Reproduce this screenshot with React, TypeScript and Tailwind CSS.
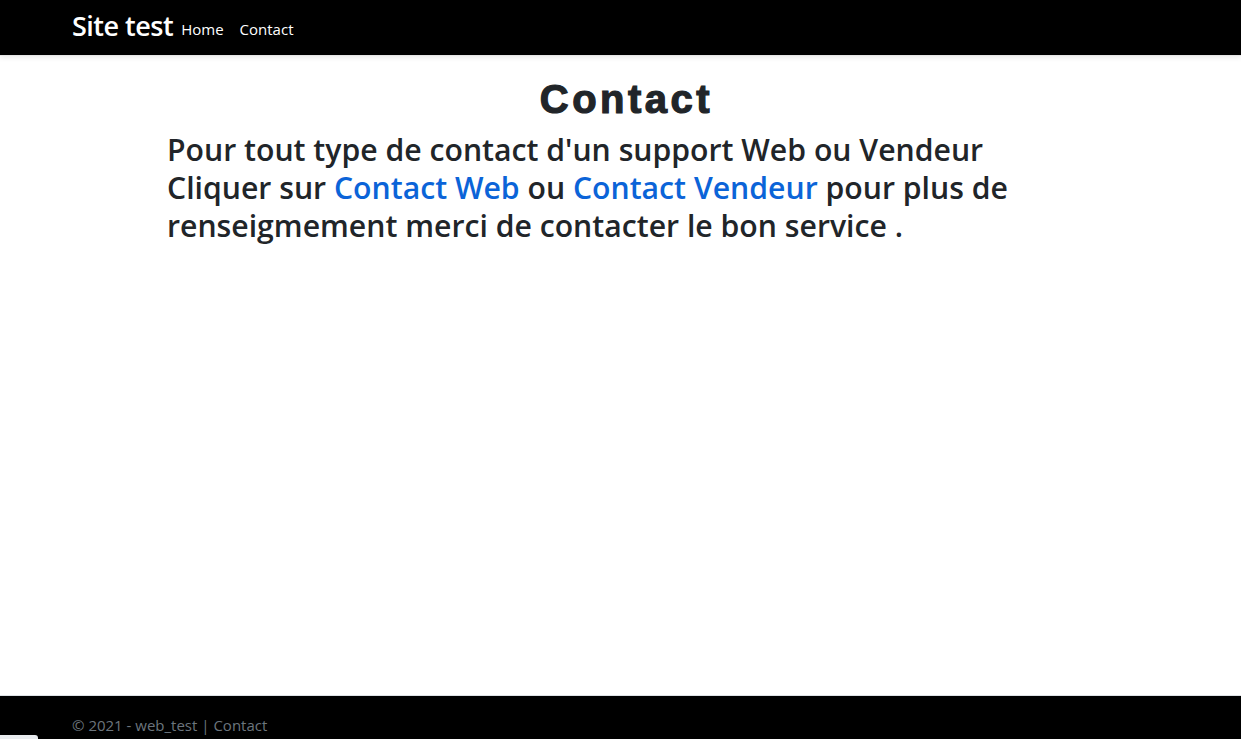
import React from "react";

const navLinks = ["Home", "Contact"];

const App = () => {
  return (
    <div className="relative flex flex-col h-[739px] bg-white font-['Segoe_UI','Open_Sans','Noto_Sans',sans-serif] text-[#212529] overflow-hidden">
      <header className="bg-black h-14 shadow-[0_2px_5px_rgba(0,0,0,0.08)] border-b border-[#e5e5e5]">
        <nav className="flex items-center h-full pl-[72px] pb-[4px]">
          <span className="text-white text-[27px] font-semibold leading-none tracking-[-0.5px] mr-2">
            Site test
          </span>
          <ul className="flex gap-4 pt-[6px]">
            {navLinks.map((item) => (
              <li key={item}>
                <a className="text-white text-[15px] leading-none">{item}</a>
              </li>
            ))}
          </ul>
        </nav>
      </header>

      <main className="flex-1 pt-[19px]">
        <h1 className="text-center ml-[12px] text-[40px] leading-[48px] font-bold font-['Liberation_Sans',Arial,sans-serif] tracking-[3.5px] [-webkit-text-stroke:1.2px_#212529]">
          Contact
        </h1>
        <h2 className="ml-[167px] mt-[8px] text-[30.2px] leading-[38px] font-semibold whitespace-nowrap">
          Pour tout type de contact d'un support Web ou Vendeur
          <br />
          Cliquer sur <a className="text-[#0b64d8]">Contact Web</a> ou{" "}
          <a className="text-[#0b64d8]">Contact Vendeur</a> pour plus de
          <br />
          renseigmement merci de contacter le bon service .
        </h2>
      </main>

      <footer className="bg-black border-t border-[#dee2e6] h-[44px] pl-[72px] pt-[22px]">
        <p className="text-[#6c757d] text-[15px] leading-none">
          © 2021 - web_test | <a>Contact</a>
        </p>
      </footer>

      <div className="absolute left-0 bottom-0 w-[38px] h-[4px] bg-[#e9ecef] rounded-tr-[3px]" />
    </div>
  );
};

export default App;
